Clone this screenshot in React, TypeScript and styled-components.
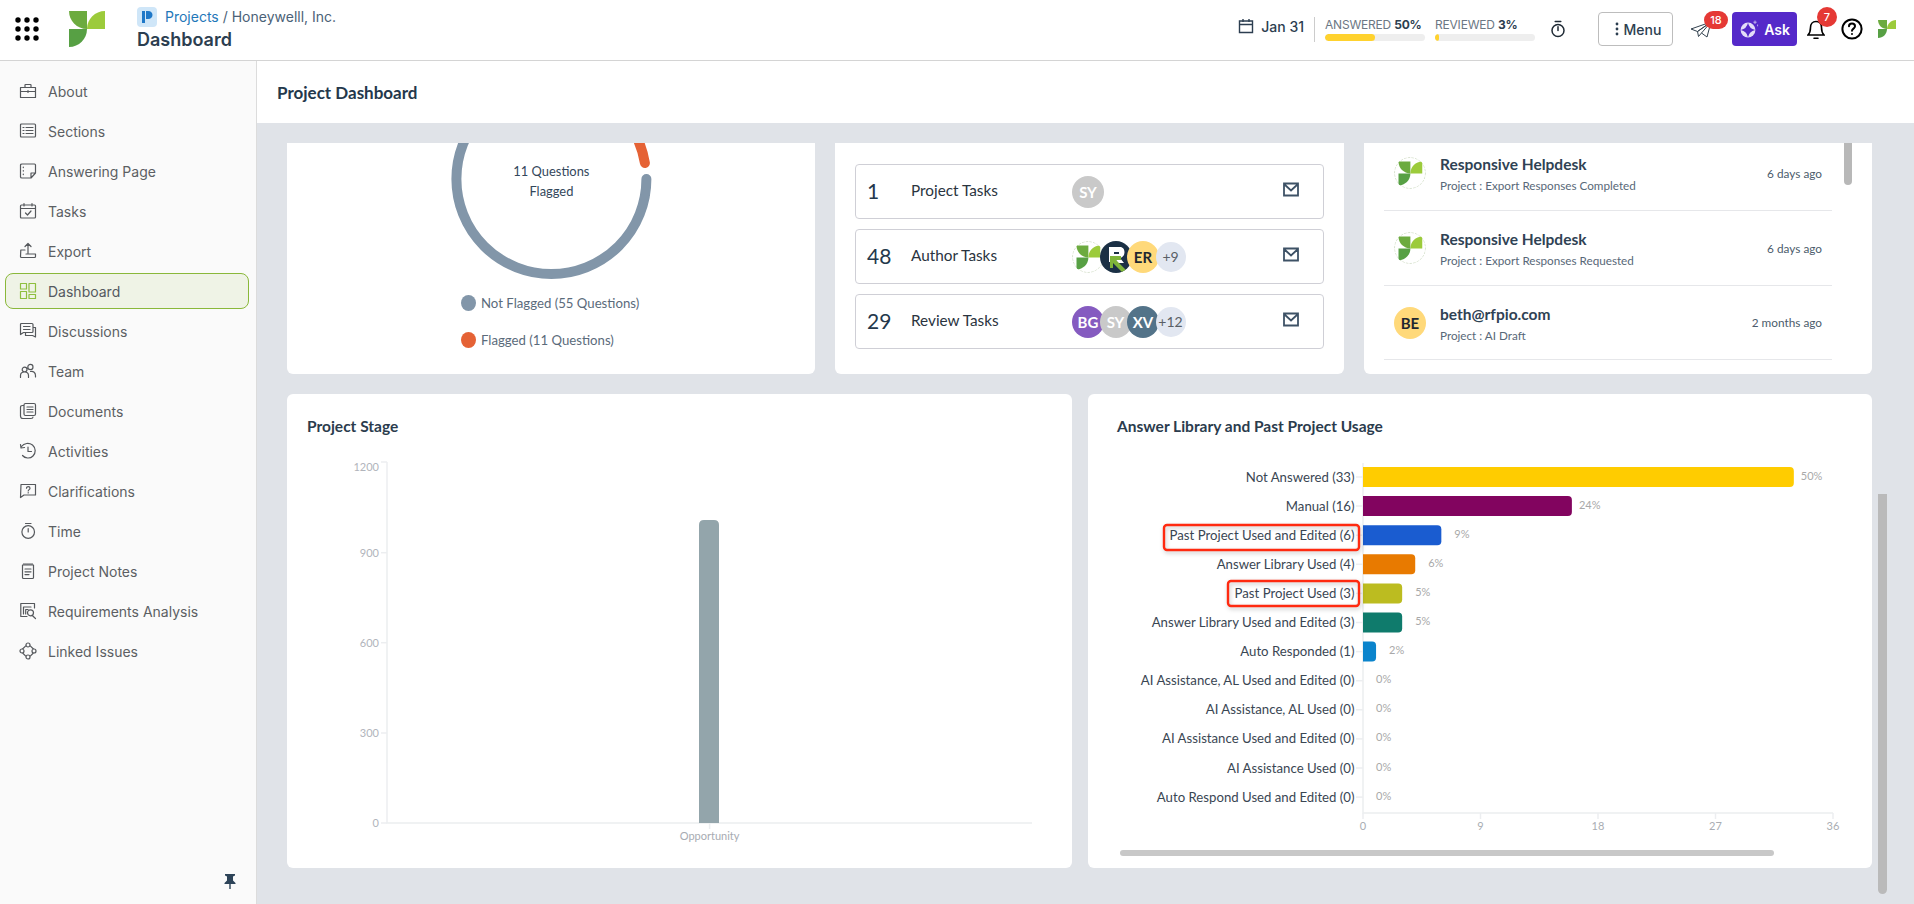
import React from 'react';
import styled, { createGlobalStyle } from 'styled-components';

const body = '"Lato", "Noto Sans", sans-serif';
const ui = '"Inter", "Liberation Sans", sans-serif';

const Global = createGlobalStyle`
  html, body { margin: 0; padding: 0; height: 100%; overflow: hidden; background: #e0e3e8; }
  #root { height: 100%; }
  * { box-sizing: border-box; }
`;

const Page = styled.div`width: 1914px; height: 904px; display: flex; flex-direction: column; position: relative; overflow: hidden; font-family: ${body};`;
const Header = styled.header`height: 61px; background: #fff; border-bottom: 1px solid #d4d4d4; display: flex; align-items: center; flex: none; font-family: ${ui};`;
const Dots = styled.svg`width: 24px; height: 24px; margin: 0 0 2px 15px; flex: none;`;
const LogoWrap = styled.svg`width: 36px; height: 36px; margin: 0 32px 2px 30px; flex: none;`;
const Crumbs = styled.div`display: flex; flex-direction: column; gap: 2px; margin-top: 5px;`;
const CrumbRow = styled.div`display: flex; align-items: center; gap: 8px; font-size: 14px; color: #4b6277; line-height: 20px; margin-top: -8px;`;
const CrumbLink = styled.span`color: #1f78b9;`;
const PTitle = styled.div`font-size: 18px; font-weight: 600; color: #2c3e50; line-height: 21px;`;
const HRight = styled.div`margin-left: auto; display: flex; align-items: center; height: 100%; padding-bottom: 2px;`;
const DateBox = styled.div`display: flex; align-items: center; margin: 0 0 6px -1px;`;
const DateText = styled.span`font-size: 14px; font-weight: 500; color: #2c3e50; margin-left: 7px;`;
const Sep = styled.div`width: 1px; height: 25px; background: #ccc; margin: 0 10px;`;
const Progress = styled.div`width: 100px; margin-right: 10px; display: flex; flex-direction: column; gap: 2px;`;
const ProgLabel = styled.div`font-size: 12px; line-height: 15px; color: #6c7784; white-space: nowrap; letter-spacing: -0.2px; b { color: #2c3e50; font-weight: 700; }`;
const Track = styled.div`height: 7px; background: #eee; border-radius: 4px; overflow: hidden;`;
const Fill = styled.div<{ $w: number }>`height: 100%; width: ${p => p.$w}%; background: #ffd22e; border-radius: 4px;`;
const MenuBtn = styled.div`width: 75px; height: 34px; margin-left: 32px; border: 1px solid #bdbdbd; border-radius: 4px; display: flex; align-items: center; justify-content: center; font-size: 14px; font-weight: 500; color: #2c3e50;`;
const IconSlot = styled.div<{ $w: number; $ml: number }>`position: relative; width: ${p => p.$w}px; margin-left: ${p => p.$ml}px; display: flex; align-items: center; justify-content: center; height: 34px; flex: none;`;
const Badge = styled.span<{ $l: number; $t: number; $w: number; $h: number }>`position: absolute; left: ${p => p.$l}px; top: ${p => p.$t}px; width: ${p => p.$w}px; height: ${p => p.$h}px; background: #e53935; color: #fff; border-radius: 10px; font-size: 11px; font-weight: 500; display: flex; align-items: center; justify-content: center;`;
const AskBtn = styled.div`width: 65px; height: 34px; margin-left: 20px; background: #5529c9; border-radius: 4px; display: flex; align-items: center; justify-content: center; gap: 5px; color: #fff; font-size: 14px; font-weight: 600; flex: none;`;

const Body = styled.div`display: flex; flex: 1; min-height: 0;`;
const Side = styled.nav`width: 257px; flex: none; background: #fafafa; border-right: 1px solid #dcdcdc; padding: 12px 5px 0 5px; display: flex; flex-direction: column; position: relative;`;
const NavItem = styled.div<{ $active?: boolean }>`height: 36px; margin-bottom: 4px; display: flex; align-items: center; gap: 11px; padding-left: 13px; font-family: ${ui}; font-size: 14px; color: ${p => p.$active ? '#54595f' : '#5c5f63'}; border-radius: 8px; width: 244px; border: 1px solid ${p => p.$active ? '#8ab83a' : 'transparent'}; background: ${p => p.$active ? '#eff3e6' : 'transparent'}; svg { flex: none; color: ${p => p.$active ? '#8fbf3f' : '#55585c'}; }`;
const PinSlot = styled.svg`position: absolute; left: 222px; top: 812px; width: 16px; height: 16px;`;

const Main = styled.main`flex: 1; min-width: 0; display: flex; flex-direction: column;`;
const TitleBar = styled.div`height: 62px; background: #fff; display: flex; align-items: center; padding-left: 20px; font-size: 17px; font-weight: 700; color: #24384c; flex: none;`;
const Scroll = styled.div`flex: 1; padding: 20px 42px 0 30px; display: flex; flex-direction: column; gap: 20px; min-height: 0;`;
const TopRow = styled.div`display: grid; grid-template-columns: 528px 509px 508px; gap: 20px; height: 231px; flex: none;`;
const Card = styled.section`background: #fff; border-radius: 0 0 6px 6px; overflow: hidden; position: relative;`;
const DonutCard = styled(Card)`display: flex; flex-direction: column; align-items: flex-start;`;
const DonutSvg = styled.svg`display: block; flex: none; width: 528px; height: 146px;`;
const Legend = styled.div`display: flex; flex-direction: column; gap: 21px; padding: 6px 0 0 174px;`;
const LegendRow = styled.div`display: flex; align-items: center; gap: 5px; font-size: 13.2px; line-height: 16px; color: #5b6b7b;`;
const Dot = styled.span<{ $c: string }>`width: 15px; height: 16px; border-radius: 50%; background: ${p => p.$c}; flex: none;`;
const TaskCard = styled(Card)`padding: 21px 20px 0 20px; display: flex; flex-direction: column; gap: 10px;`;
const TaskRow = styled.div`height: 55px; border: 1px solid #cfcfd6; border-radius: 4px; display: grid; grid-template-columns: 44px 161px 1fr 17px; align-items: center; padding: 0 23px 0 11px;`;
const TaskNum = styled.span`font-size: 21px; color: #24384c; margin-top: -3px;`;
const TaskLabel = styled.span`font-size: 15.3px; color: #2a3440; margin-top: -3px;`;
const Stack = styled.div`display: flex; align-items: center;`;
const Avatar = styled.span<{ $bg: string; $fg?: string }>`width: 32px; height: 32px; border-radius: 50%; background: ${p => p.$bg}; color: ${p => p.$fg || '#fff'}; display: flex; align-items: center; justify-content: center; font-size: 15px; font-weight: 700; margin-right: -4.5px; flex: none; overflow: hidden; position: relative;`;
const More = styled.span`width: 30px; height: 30px; border-radius: 50%; background: #e2e7f1; color: #5a5f66; display: flex; align-items: center; justify-content: center; font-size: 14px; margin-left: 1px; position: relative;`;
const MailSvg = styled.svg`width: 16px; height: 15px; margin-top: -4px; fill: none; stroke: #3e5266; stroke-width: 1.8;`;
const ActivityCard = styled(Card)`padding: 0 40px 0 20px;`;
const ActRow = styled.div<{ $h: number; $clip?: number }>`height: ${p => p.$h}px; margin-top: ${p => p.$clip || 0}px; border-bottom: 1px solid #e6e7ea; display: flex; align-items: center; padding: 0 10px; gap: 18.5px;`;
const ActText = styled.div`flex: 1; min-width: 0; display: flex; flex-direction: column; gap: 3px; padding-top: 2px;`;
const ActTitle = styled.div`font-size: 15.5px; font-weight: 700; line-height: 19px; color: #2f4254;`;
const ActSub = styled.div`font-size: 11.7px; line-height: 16px; color: #586878;`;
const ActTime = styled.div`font-size: 11.8px; color: #4c5c6c;`;
const ThumbV = styled.div`position: absolute; right: 20px; top: 0; width: 8px; height: 42px; background: #b8b8b8; border-radius: 0 0 4px 4px;`;
const BottomRow = styled.div`display: grid; grid-template-columns: 785px 784px; gap: 16px; height: 474px; flex: none;`;
const ChartCard = styled.section`background: #fff; border-radius: 6px; position: relative; overflow: hidden;`;
const ChartTitle = styled.h3<{ $l: number }>`position: absolute; margin: 0; left: ${p => p.$l}px; top: 22px; font-size: 15.5px; line-height: 20px; font-weight: 700; color: #2b3c4d;`;
const ChartSvg = styled.svg`display: block; width: 100%; height: 100%;`;
const ThumbH = styled.div`position: absolute; left: 32px; top: 456px; width: 654px; height: 6px; background: #c8c8c8; border-radius: 3px;`;
const PageThumb = styled.div`position: absolute; left: 1878px; top: 494px; width: 9px; height: 400px; background: #bababa; border-radius: 0 0 5px 5px;`;
const GlyphSvg = styled.svg`width: 18px; height: 18px; fill: none; stroke: currentColor; stroke-width: 1.2; stroke-linecap: round; stroke-linejoin: round;`;

const LogoShapes = () => (
  <>
    <path d="M0 0H18V18C8 18 0 10 0 0Z" fill="#6cab3f" />
    <path d="M18 18C18 8 26 0 36 0V18Z" fill="#9ccb3b" />
    <path d="M0 18H18C18 28 10 36 0 36Z" fill="#57a044" />
  </>
);

const RingAvatar = () => (
  <Avatar $bg="#fff">
    <svg width="32" height="32" viewBox="0 0 32 32">
      <circle cx="16" cy="16" r="15.5" fill="#fff" stroke="#cfdcc4" strokeWidth=".8" strokeDasharray="2.5 1.2" />
      <g transform="translate(4.5 4.5) scale(.66)"><LogoShapes /></g>
    </svg>
  </Avatar>
);

const RAvatar = () => (
  <Avatar $bg="#1b3045">
    <svg width="32" height="32" viewBox="0 0 32 32">
      <path d="M9 6H20C26 6 26 16 20 17L24 22H18L14 16H14V21H9Z" fill="#fff" />
      <path d="M14 11H19V13H14Z" fill="#1b3045" />
      <path d="M10 15H21V19H16L26 29L23 32L13 22V27H10Z" fill="#7fb539" />
    </svg>
  </Avatar>
);

const MailGlyph = () => (
  <MailSvg viewBox="0 0 16 15"><path d="M1 1.5H15V13.5H1ZM1 2L8 8.5L15 2" /></MailSvg>
);

const Glyph = ({ d, children }: { d?: string; children?: React.ReactNode }) => (
  <GlyphSvg viewBox="0 0 18 18">{d && <path d={d} />}{children}</GlyphSvg>
);

const navItems: [string, React.ReactNode][] = [
  ['About', <Glyph d="M1.5 5.5H16.5V15.5H1.5ZM6 5.5V3Q6 2.5 6.5 2.5H11.5Q12 2.5 12 3V5.5M1.5 9.5H16.5M9 8.5V10.5" />],
  ['Sections', <Glyph d="M2.5 2H15.5Q16.5 2 16.5 3V14Q16.5 15 15.5 15H2.5Q1.5 15 1.5 14V3Q1.5 2 2.5 2ZM7 5.5H14M7 8.5H14M7 11.5H14M4 5.5H5M4 8.5H5M4 11.5H5" />],
  ['Answering Page', <Glyph d="M3 2H15.5Q16.5 2 16.5 3V11L12 16H3Q1.5 16 1.5 15V3Q1.5 2 3 2ZM16.5 11H12V16M4.3 5V5.6M4.3 8.5V9.1M4.3 12V12.6" />],
  ['Tasks', <Glyph d="M2.5 3H15.5Q16.5 3 16.5 4V15Q16.5 16 15.5 16H2.5Q1.5 16 1.5 15V4Q1.5 3 2.5 3ZM1.5 6.5H16.5M5 1.5V4M13 1.5V4M6.5 11L8.5 13L12 9" />],
  ['Export', <Glyph d="M9 1.5V11M6 4.5L9 1.5L12 4.5M6 8H1.8L1.5 14.5Q1.5 15.5 2.5 15.5H15.5Q16.5 15.5 16.5 14.5V12H7" />],
  ['Dashboard', <Glyph d="M1.5 1.5H7.5V7H1.5ZM1.5 9.5H7.5V16.5H1.5ZM10 1.5H16.5V10H10ZM10 12.5H16.5V16.5H10Z" />],
  ['Discussions', <Glyph d="M2.5 1.5H13Q14 1.5 14 2.5V9.5Q14 10.5 13 10.5H4.5L1.5 12.5V2.5Q1.5 1.5 2.5 1.5ZM4.5 4.5H11M4.5 7.5H11M14 5.5H16.5V15L13.5 13.5H6.5V10.5" />],
  ['Team', <Glyph d="M1.5 15.5V13.5C1.5 11 3 10 5.5 10S9.5 11 9.5 13.5V15.5M11.5 9.5C14.5 9 16.5 10.5 16.5 13.5V15M14 5a2.6 2.6 0 1 1-5.2 0a2.6 2.6 0 1 1 5.2 0ZM8 7.5a2.4 2.4 0 1 1-4.8 0a2.4 2.4 0 1 1 4.8 0Z" />],
  ['Documents', <Glyph d="M6.5 1.5H15Q16.5 1.5 16.5 3V12Q16.5 13.5 15 13.5H6.5Q5 13.5 5 12V3Q5 1.5 6.5 1.5ZM8 5H14M8 7.5H14M8 10H14M4.5 3.5H3.5Q1.5 3.5 1.5 5.5V14Q1.5 16.5 4 16.5H12Q14 16.5 14 15" />],
  ['Activities', <Glyph d="M2.5 4.5C5 1 10 0.5 13.5 3C17 6 17 11 14 14C11 17 6 16.5 3.5 13.5M1.5 2.5L2 6L5.5 5.5M9 5V9.5H12.5" />],
  ['Clarifications', <Glyph d="M2 2.5H16.5V13H5L1.5 15.5ZM7.5 6.2C7.5 4 11 4 11 6.2C11 7.6 9.2 7.6 9.2 9M9.2 10.6V11" />],
  ['Time', <Glyph d="M15.5 10a6.3 6.3 0 1 1-12.6 0a6.3 6.3 0 1 1 12.6 0ZM6.5 1.5H12M9.2 6.5V10" />],
  ['Project Notes', <Glyph d="M3.5 3H14.5V15.5Q14.5 16.5 13.5 16.5H4.5Q3.5 16.5 3.5 15.5ZM5 1.5V3M7 1.5V3M9 1.5V3M11 1.5V3M13 1.5V3M6 7H12M6 9.8H12M6 12.6H10" />],
  ['Requirements Analysis', <Glyph d="M8 14.5H1.8V1.5H15.5V6M4.5 12V5H12M6.7 12V7.5H9M16.5 16.5L13.8 14M14.5 10.8a3 3 0 1 1-6 0a3 3 0 1 1 6 0Z" />],
  ['Linked Issues', <Glyph d="M7 3.6L3.6 7M11 3.6L14.4 7M14.4 11L11 14.4M7 14.4L3.6 11M11 3a2 2 0 1 1-4 0a2 2 0 1 1 4 0ZM11 15a2 2 0 1 1-4 0a2 2 0 1 1 4 0ZM5 9a2 2 0 1 1-4 0a2 2 0 1 1 4 0ZM17 9a2 2 0 1 1-4 0a2 2 0 1 1 4 0Z" />],
];

const bars: [string, number, string, string, number][] = [
  ['Not Answered (33)', 33, '#ffcc00', '50%', 7],
  ['Manual (16)', 16, '#82045f', '24%', 7],
  ['Past Project Used and Edited (6)', 6, '#1a5cd0', '9%', 13],
  ['Answer Library Used (4)', 4, '#e87a00', '6%', 13],
  ['Past Project Used (3)', 3, '#bcbc20', '5%', 13],
  ['Answer Library Used and Edited (3)', 3, '#0f7b6c', '5%', 13],
  ['Auto Responded (1)', 1, '#0b84cc', '2%', 13],
  ['AI Assistance, AL Used and Edited (0)', 0, '#999', '0%', 13],
  ['AI Assistance, AL Used (0)', 0, '#999', '0%', 13],
  ['AI Assistance Used and Edited (0)', 0, '#999', '0%', 13],
  ['AI Assistance Used (0)', 0, '#999', '0%', 13],
  ['Auto Respond Used and Edited (0)', 0, '#999', '0%', 13],
];

const StageChart = () => (
  <ChartSvg viewBox="0 0 785 474">
    <g stroke="#eceef0" strokeWidth="1.5" fill="none">
      <path d="M100 68V429H745" />
      {[68, 158.7, 248.7, 339, 429].map(y => <path key={y} d={`M94 ${y}H100`} />)}
      <path d="M422.6 429V435" />
    </g>
    <path d="M412 429V131Q412 126 417 126H427Q432 126 432 131V429Z" fill="#93a5ab" />
    <g fontFamily={body} fontSize="11" fill="#b1b4bb" textAnchor="end">
      <text x="92" y="77">1200</text>
      <text x="92" y="162.5">900</text>
      <text x="92" y="252.5">600</text>
      <text x="92" y="343">300</text>
      <text x="92" y="433">0</text>
    </g>
    <text x="422.6" y="446" fontFamily={body} fontSize="11" fill="#a7abb2" textAnchor="middle">Opportunity</text>
  </ChartSvg>
);

const Redbox = ({ x, y, w }: { x: number; y: number; w: number }) => (
  <rect x={x} y={y} width={w} height={25} rx="3" fill="none" stroke="#ff2a10" strokeWidth="2.4" style={{ filter: 'drop-shadow(1px 2px 2px rgba(0,0,0,.22))' }} />
);

const UsageChart = () => {
  const x0 = 275;
  const unit = 470 / 36;
  return (
    <ChartSvg viewBox="0 0 784 474">
      <g stroke="#eceef0" strokeWidth="1.5" fill="none">
        <path d={`M${x0} 69V419H${x0 + 470}`} />
        {[0, 9, 18, 27, 36].map(v => <path key={v} d={`M${x0 + v * unit} 419V425`} />)}
      </g>
      {bars.map(([label, v, color, pct, gap], i) => {
        const y = 73 + i * 29.1;
        const w = v * unit;
        return (
          <g key={label}>
            <path d={`M${x0 - 7} ${y + 10}H${x0}`} stroke="#eceef0" strokeWidth="1.5" />
            {v > 0 && <path d={`M${x0} ${y}H${x0 + w - 4}Q${x0 + w} ${y} ${x0 + w} ${y + 4}V${y + 16}Q${x0 + w} ${y + 20} ${x0 + w - 4} ${y + 20}H${x0}Z`} fill={color} />}
            <text x={x0 - 8.5} y={y + 14.5} textAnchor="end" fontFamily={body} fontSize="13.2" fill="#3a4653">{label}</text>
            <text x={x0 + w + gap} y={y + 12.5} fontFamily={body} fontSize="11" fill="#a9a9a9">{pct}</text>
          </g>
        );
      })}
      <g fontFamily={body} fontSize="11" fill="#a9adb3" textAnchor="middle">
        {[0, 9, 18, 27, 36].map(v => <text key={v} x={x0 + v * unit} y={436}>{v}</text>)}
      </g>
      <Redbox x={76} y={131} w={195} />
      <Redbox x={140} y={187} w={131} />
    </ChartSvg>
  );
};

export default function App() {
  return (
    <Page>
      <Global />
      <Header>
        <Dots viewBox="0 0 24 24">
          {[3, 12, 21].map(x => [3, 12, 21].map(y => <circle key={`${x}${y}`} cx={x} cy={y} r="2.7" fill="#000" />))}
        </Dots>
        <LogoWrap viewBox="0 0 36 36"><LogoShapes /></LogoWrap>
        <Crumbs>
          <CrumbRow>
            <svg width="20" height="20" viewBox="0 0 20 20">
              <rect width="20" height="20" rx="4" fill="#cfe6f8" />
              <path d="M5 4H8V16H5ZM9 4H11C17 4 17 12 11 12H9Z" fill="#1e78c8" />
            </svg>
            <span><CrumbLink>Projects</CrumbLink> / Honeywelll, Inc.</span>
          </CrumbRow>
          <PTitle>Dashboard</PTitle>
        </Crumbs>
        <HRight>
          <DateBox>
            <svg width="16" height="16" viewBox="0 0 16 16" fill="none" stroke="#2c3e50" strokeWidth="1.4"><path d="M1.5 3H14.5V14.5H1.5ZM1.5 6.5H14.5M5 1V4M11 1V4" /></svg>
            <DateText>Jan 31</DateText>
          </DateBox>
          <Sep />
          <Progress>
            <ProgLabel>ANSWERED <b>50%</b></ProgLabel>
            <Track><Fill $w={50} /></Track>
          </Progress>
          <Progress>
            <ProgLabel>REVIEWED <b>3%</b></ProgLabel>
            <Track><Fill $w={4} /></Track>
          </Progress>
          <IconSlot $w={16} $ml={5}>
            <svg width="16" height="18" viewBox="0 0 16 18" fill="none" stroke="#1f2a35" strokeWidth="1.5" strokeLinecap="round"><circle cx="8" cy="10.5" r="6" /><path d="M5.2 1.5H10.8M8 6.8V10.5" /></svg>
          </IconSlot>
          <MenuBtn>
            <svg width="14" height="16" viewBox="0 0 14 16" fill="#2c3e50"><circle cx="7" cy="3" r="1.4" /><circle cx="7" cy="8" r="1.4" /><circle cx="7" cy="13" r="1.4" /></svg>
            Menu
          </MenuBtn>
          <IconSlot $w={22} $ml={17}>
            <svg width="22" height="17" viewBox="0 0 22 17" fill="none" stroke="#33424f" strokeWidth="1" strokeLinejoin="round"><path d="M21 1L1 8L7.5 10.5ZM21 1L7.5 10.5L8.5 15.5L11.5 12ZM21 1L17 16L11.5 12" /></svg>
            <Badge $l={14} $t={-1} $w={24} $h={18}>18</Badge>
          </IconSlot>
          <AskBtn>
            <svg width="20" height="20" viewBox="0 0 20 20">
              <circle cx="9" cy="11" r="7.4" fill="#e3dcf8" />
              <path d="M9 3.8Q10.2 9.8 16.2 11Q10.2 12.2 9 18.2Q7.8 12.2 1.8 11Q7.8 9.8 9 3.8Z" fill="#5529c9" />
              <path d="M16 1.5V5M14.3 3.2H17.7M18.6 5.5V7.3" stroke="#e3dcf8" strokeWidth=".7" />
            </svg>
            Ask
          </AskBtn>
          <IconSlot $w={18} $ml={10}>
            <svg width="18" height="21" viewBox="0 0 18 21" fill="none" stroke="#000" strokeWidth="1.6" strokeLinecap="round"><path d="M1 16H17C15 14 14.5 12.5 14.5 8.5C14.5 5 12.5 2.5 9 2.5S3.5 5 3.5 8.5C3.5 12.5 3 14 1 16ZM7 19.3H11" /></svg>
            <Badge $l={10} $t={-5} $w={20} $h={20}>7</Badge>
          </IconSlot>
          <IconSlot $w={22} $ml={16}>
            <svg width="22" height="22" viewBox="0 0 22 22" fill="none" stroke="#000" strokeWidth="2" strokeLinecap="round"><circle cx="11" cy="11" r="9.6" /><path d="M8 8.3C8 4.6 14 4.6 14 8.3C14 10.6 11 10.6 11 12.8M11 16V16.1" /></svg>
          </IconSlot>
          <IconSlot $w={18} $ml={15}><svg width="18" height="18" viewBox="0 0 36 36"><LogoShapes /></svg></IconSlot>
          <IconSlot $w={18} $ml={0} />
        </HRight>
      </Header>
      <Body>
        <Side>
          {navItems.map(([label, icon]) => (
            <NavItem key={label} $active={label === 'Dashboard'}>{icon}<span>{label}</span></NavItem>
          ))}
          <PinSlot viewBox="0 0 16 16" fill="#2d4358"><path d="M3 1H13V2.5L11 3.5V7.5L13.5 10V11H8.7V16H7.3V11H2.5V10L5 7.5V3.5L3 2.5Z" /></PinSlot>
        </Side>
        <Main>
          <TitleBar>Project Dashboard</TitleBar>
          <Scroll>
            <TopRow>
              <DonutCard>
                <DonutSvg viewBox="0 0 528 146">
                  <circle cx="264.4" cy="36" r="95" fill="none" stroke="#8296a9" strokeWidth="10" strokeLinecap="round" strokeDasharray="500 597" pathLength="597" />
                  <path d="M 342 -19 A 95 95 0 0 1 357.9 20" fill="none" stroke="#e56235" strokeWidth="10" strokeLinecap="round" />
                  <text x="264.4" y="33" textAnchor="middle" fontFamily={body} fontSize="12.9" fill="#33475b">11 Questions</text>
                  <text x="264.4" y="53" textAnchor="middle" fontFamily={body} fontSize="12.9" fill="#33475b">Flagged</text>
                </DonutSvg>
                <Legend>
                  <LegendRow><Dot $c="#8296a9" />Not Flagged (55 Questions)</LegendRow>
                  <LegendRow><Dot $c="#e56235" />Flagged (11 Questions)</LegendRow>
                </Legend>
              </DonutCard>
              <TaskCard>
                <TaskRow>
                  <TaskNum>1</TaskNum><TaskLabel>Project Tasks</TaskLabel>
                  <Stack><Avatar $bg="#c9c9c9">SY</Avatar></Stack>
                  <MailGlyph />
                </TaskRow>
                <TaskRow>
                  <TaskNum>48</TaskNum><TaskLabel>Author Tasks</TaskLabel>
                  <Stack><RingAvatar /><RAvatar /><Avatar $bg="#ffd97a" $fg="#1e2730">ER</Avatar><More>+9</More></Stack>
                  <MailGlyph />
                </TaskRow>
                <TaskRow>
                  <TaskNum>29</TaskNum><TaskLabel>Review Tasks</TaskLabel>
                  <Stack><Avatar $bg="#855bc0">BG</Avatar><Avatar $bg="#c9c9c9">SY</Avatar><Avatar $bg="#537389">XV</Avatar><More>+12</More></Stack>
                  <MailGlyph />
                </TaskRow>
              </TaskCard>
              <ActivityCard>
                <ActRow $h={75} $clip={-7}>
                  <RingAvatar />
                  <ActText><ActTitle>Responsive Helpdesk</ActTitle><ActSub>Project : Export Responses Completed</ActSub></ActText>
                  <ActTime>6 days ago</ActTime>
                </ActRow>
                <ActRow $h={75}>
                  <RingAvatar />
                  <ActText><ActTitle>Responsive Helpdesk</ActTitle><ActSub>Project : Export Responses Requested</ActSub></ActText>
                  <ActTime>6 days ago</ActTime>
                </ActRow>
                <ActRow $h={74}>
                  <Avatar $bg="#ffd97a" $fg="#1e2730">BE</Avatar>
                  <ActText><ActTitle>beth@rfpio.com</ActTitle><ActSub>Project : AI Draft</ActSub></ActText>
                  <ActTime>2 months ago</ActTime>
                </ActRow>
                <ThumbV />
              </ActivityCard>
            </TopRow>
            <BottomRow>
              <ChartCard>
                <ChartTitle $l={20}>Project Stage</ChartTitle>
                <StageChart />
              </ChartCard>
              <ChartCard>
                <ChartTitle $l={29}>Answer Library and Past Project Usage</ChartTitle>
                <UsageChart />
                <ThumbH />
              </ChartCard>
            </BottomRow>
          </Scroll>
        </Main>
      </Body>
      <PageThumb />
    </Page>
  );
}
